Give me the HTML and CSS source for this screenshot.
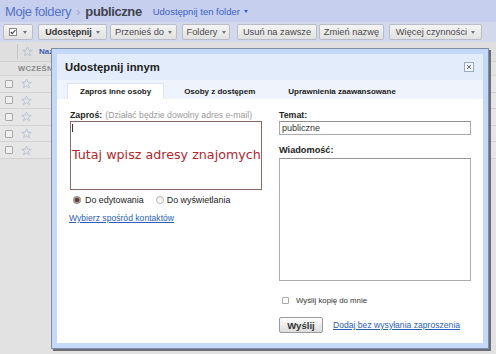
FILE: index.html
```html
<!DOCTYPE html>
<html lang="pl">
<head>
<meta charset="utf-8">
<title>Udostępnij innym</title>
<link rel="stylesheet" href="styles.css">
</head>
<body>
<header class="top">
  <span class="crumb-root">Moje foldery</span><span class="crumb-sep">›</span><span class="crumb-cur">publiczne</span>
  <span class="share-folder">Udostępnij ten folder<span class="caret"></span></span>
</header>
<div class="toolbar">
  <span class="btn b1"><svg class="tb-check" width="8" height="8" viewBox="0 0 8 8"><rect x="0.5" y="0.5" width="7" height="7" fill="#fff" stroke="#8a8a8a"/><path d="M1.8 4 L3.3 5.6 L6.3 2" fill="none" stroke="#444" stroke-width="1.1"/></svg><span class="caret"></span></span>
  <span class="btn b2"><b>Udostępnij</b><span class="caret"></span></span>
  <span class="btn b3">Przenieś do<span class="caret"></span></span>
  <span class="btn b4">Foldery<span class="caret"></span></span>
  <span class="btn b5">Usuń na zawsze</span>
  <span class="btn b6">Zmień nazwę</span>
  <span class="btn b7">Więcej czynności<span class="caret"></span></span>
</div>
<div class="list">
  <div class="list-head"><span class="col-sep"></span><svg class="star" width="11" height="11" viewBox="0 0 11 11"><path d="M5.5 1 L6.8 4.2 L10.2 4.3 L7.5 6.4 L8.5 9.8 L5.5 7.9 L2.5 9.8 L3.5 6.4 L0.8 4.3 L4.2 4.2 Z" fill="none" stroke="#b7bfd0" stroke-width="0.9"/></svg><span class="col-name">Nazwa</span></div>
  <div class="section">WCZEŚNIEJ</div>
  <div class="row"><span class="chk"></span><svg class="star" width="11" height="11" viewBox="0 0 11 11"><path d="M5.5 1 L6.8 4.2 L10.2 4.3 L7.5 6.4 L8.5 9.8 L5.5 7.9 L2.5 9.8 L3.5 6.4 L0.8 4.3 L4.2 4.2 Z" fill="none" stroke="#b7bfd0" stroke-width="0.9"/></svg></div>
  <div class="row"><span class="chk"></span><svg class="star" width="11" height="11" viewBox="0 0 11 11"><path d="M5.5 1 L6.8 4.2 L10.2 4.3 L7.5 6.4 L8.5 9.8 L5.5 7.9 L2.5 9.8 L3.5 6.4 L0.8 4.3 L4.2 4.2 Z" fill="none" stroke="#b7bfd0" stroke-width="0.9"/></svg></div>
  <div class="row"><span class="chk"></span><svg class="star" width="11" height="11" viewBox="0 0 11 11"><path d="M5.5 1 L6.8 4.2 L10.2 4.3 L7.5 6.4 L8.5 9.8 L5.5 7.9 L2.5 9.8 L3.5 6.4 L0.8 4.3 L4.2 4.2 Z" fill="none" stroke="#b7bfd0" stroke-width="0.9"/></svg></div>
  <div class="row"><span class="chk"></span><svg class="star" width="11" height="11" viewBox="0 0 11 11"><path d="M5.5 1 L6.8 4.2 L10.2 4.3 L7.5 6.4 L8.5 9.8 L5.5 7.9 L2.5 9.8 L3.5 6.4 L0.8 4.3 L4.2 4.2 Z" fill="none" stroke="#b7bfd0" stroke-width="0.9"/></svg></div>
  <div class="row"><span class="chk"></span><svg class="star" width="11" height="11" viewBox="0 0 11 11"><path d="M5.5 1 L6.8 4.2 L10.2 4.3 L7.5 6.4 L8.5 9.8 L5.5 7.9 L2.5 9.8 L3.5 6.4 L0.8 4.3 L4.2 4.2 Z" fill="none" stroke="#b7bfd0" stroke-width="0.9"/></svg></div>
</div>

<div class="dialog">
  <div class="dbox">
    <div class="dhead">
      <span class="dtitle">Udostępnij innym</span>
      <svg class="close" width="10" height="10" viewBox="0 0 10 10"><rect x="0.5" y="0.5" width="9" height="9" fill="#f1f5fc" stroke="#9eacc3"/><path d="M3 3 L7 7 M7 3 L3 7" stroke="#666" stroke-width="1"/></svg>
    </div>
    <div class="tabs">
      <span class="tab active">Zaproś inne osoby</span>
      <span class="tab">Osoby z dostępem</span>
      <span class="tab">Uprawnienia zaawansowane</span>
    </div>
    <div class="dcontent">
      <div class="col">
        <div class="lbl"><b>Zaproś:</b><span class="hint">(Działać będzie dowolny adres e-mail)</span></div>
        <div class="invite">
          <div class="cursor"></div>
          <div class="annot">Tutaj wpisz adresy znajomych</div>
        </div>
        <div class="radios">
          <span class="radio on"></span><span class="rlabel">Do edytowania</span>
          <span class="radio off"></span><span class="rlabel">Do wyświetlania</span>
        </div>
        <span class="link contacts">Wybierz spośród kontaktów</span>
      </div>
      <div class="col">
        <div class="lbl"><b>Temat:</b></div>
        <div class="subject">publiczne</div>
        <div class="lbl lbl-msg"><b>Wiadomość:</b></div>
        <div class="message"></div>
        <div class="copy"><span class="cbox"></span>Wyślij kopię do mnie</div>
        <div class="actions">
          <span class="send">Wyślij</span>
          <span class="link addlink">Dodaj bez wysyłania zaproszenia</span>
        </div>
      </div>
    </div>
  </div>
</div>
</body>
</html>
```

FILE: styles.css
```css
* { box-sizing: border-box; }

body {
  margin: 0;
  width: 496px;
  height: 354px;
  overflow: hidden;
  position: relative;
  background: #e2e2e2;
  font-family: "Liberation Sans", Arial, sans-serif;
  color: #222;
}

/* ---------- header ---------- */
.top {
  height: 22px;
  background: #c6d0ee;
  display: flex;
  align-items: center;
  padding-left: 5px;
  white-space: nowrap;
}
.crumb-root { font-size: 13px; letter-spacing: -0.4px; color: #5670c6; }
.crumb-sep { font-size: 13px; color: #9ea9cc; margin: 0 5px; }
.crumb-cur { font-size: 13px; letter-spacing: -0.4px; font-weight: bold; color: #42434f; }
.share-folder {
  margin-left: 11px;
  margin-top: 1px;
  font-size: 9.5px;
  color: #3b5ec2;
  display: flex;
  align-items: center;
}
.caret {
  display: inline-block;
  width: 0;
  height: 0;
  border-left: 2.5px solid transparent;
  border-right: 2.5px solid transparent;
  border-top: 3px solid #777;
  margin-left: 4px;
}
.share-folder .caret { border-top-color: #3b5ec2; }

/* ---------- toolbar ---------- */
.toolbar {
  height: 20px;
  background: #d3d9ec;
  display: flex;
  align-items: center;
  padding-left: 3px;
}
.btn {
  height: 16px;
  border: 1px solid #babdc6;
  border-radius: 2px;
  background: linear-gradient(#f4f4f4, #e1e1e1);
  display: flex;
  align-items: center;
  justify-content: center;
  font-size: 9.3px;
  color: #4a4a4a;
  white-space: nowrap;
}
.btn b { font-size: 9px; color: #333; }
.b1 { width: 30px; }
.b1 .caret { margin-left: 6px; }
.b2 { width: 69px; margin-left: 5px; }
.b3 { width: 67px; margin-left: 3px; }
.b4 { width: 48px; margin-left: 5px; }
.b5 { width: 80px; margin-left: 7px; }
.b6 { width: 65px; margin-left: 2px; }
.b7 { width: 93px; margin-left: 5px; }

/* ---------- list ---------- */
.list-head {
  height: 20px;
  display: flex;
  align-items: center;
  background: #dfdfdf;
  border-bottom: 1px solid #d0d0d0;
}
.col-sep { width: 1px; height: 15px; background: #c6c6c6; margin-left: 17px; }
.list-head .star { margin-left: 4px; }
.col-name { margin-left: 6px; font-size: 8px; font-weight: bold; color: #3c5db5; }
.section {
  height: 14px;
  display: flex;
  align-items: center;
  padding-left: 18px;
  font-size: 7.6px;
  font-weight: bold;
  color: #8a8a8a;
  letter-spacing: 0.3px;
  border-bottom: 1px solid #d6d6d6;
}
.row {
  height: 16.6px;
  display: flex;
  align-items: center;
  padding-left: 5px;
  background: #e6e6e6;
  border-bottom: 1px solid #d3d3d3;
}
.chk {
  width: 8px;
  height: 8px;
  border: 1px solid #a9a9a9;
  border-radius: 1px;
  background: #efefef;
}
.row .star { margin-left: 8px; }

/* ---------- dialog ---------- */
.dialog {
  position: absolute;
  left: 51px;
  top: 48px;
  width: 438px;
  height: 301px;
  border: 1px solid #7f8ea8;
  padding: 5px;
  background: #c4d9f8;
  box-shadow: 2px 2px 0 rgba(70, 70, 80, 0.75);
}
.dbox {
  height: 100%;
  background: #fff;
  display: flex;
  flex-direction: column;
}
.dhead {
  height: 26px;
  flex: none;
  background: #e3ecfa;
  display: flex;
  align-items: center;
  justify-content: space-between;
  padding: 0 9px 0 8px;
}
.dtitle { font-size: 11.3px; font-weight: bold; color: #1e1e1e; }
.close { display: block; margin-top: -1px; }

.tabs {
  height: 19px;
  flex: none;
  background: #eef3fc;
  display: flex;
  align-items: flex-end;
  gap: 7px;
  padding-left: 10px;
}
.tab {
  height: 16px;
  padding: 0 12px;
  display: flex;
  align-items: center;
  font-size: 8px;
  font-weight: bold;
  color: #222;
  border: 1px solid transparent;
  border-bottom: 0;
  white-space: nowrap;
}
.tab.active { background: #fff; border-color: #dae4f4; }

.dcontent {
  flex: 1;
  display: flex;
  gap: 17px;
  padding: 11px 12px 0 13px;
}
.col { width: 192px; display: flex; flex-direction: column; }
.lbl { height: 10px; line-height: 10px; font-size: 8.8px; white-space: nowrap; }
.lbl b { color: #222; }
.hint { color: #9a9a9a; font-size: 8.7px; margin-left: 3px; }

.invite {
  margin-top: 1px;
  height: 69px;
  border: 1px solid #8e6666;
  padding: 2px 1px;
}
.cursor { width: 1px; height: 8px; background: #333; }
.annot {
  margin-top: 15px;
  font-family: "DejaVu Sans", sans-serif;
  font-size: 12.7px;
  line-height: 15px;
  color: #b0272d;
  white-space: nowrap;
}

.radios {
  margin-top: 5px;
  height: 10px;
  display: flex;
  align-items: center;
  font-size: 8.9px;
  color: #222;
  white-space: nowrap;
}
.radio { width: 8px; height: 8px; border-radius: 50%; flex: none; }
.radio.on {
  margin-left: 3px;
  background: radial-gradient(circle, #6e3a36 0, #6e3a36 1.8px, #9a9a9a 2.6px);
}
.radio.off {
  margin-left: 12px;
  border: 1px solid #b3b3b3;
  background: linear-gradient(#f0f0f0, #fff);
}
.rlabel { margin-left: 4px; }
.radio.off + .rlabel { margin-left: 3px; }

.link { color: #2b5fb5; text-decoration: underline; white-space: nowrap; }
.contacts { margin-top: 8px; margin-left: -1px; font-size: 8.6px; line-height: 10px; }

.subject {
  margin-top: 1px;
  height: 14px;
  border: 1px solid #ababab;
  border-top-color: #909090;
  padding-left: 2px;
  font-size: 9px;
  line-height: 12px;
  color: #333;
}
.lbl-msg { margin-top: 10px; font-size: 9.2px; }
.message {
  margin-top: 3px;
  height: 123px;
  border: 1px solid #ababab;
  border-top-color: #959595;
}
.copy {
  margin-top: 14px;
  height: 10px;
  display: flex;
  align-items: center;
  font-size: 7.8px;
  color: #333;
  white-space: nowrap;
}
.cbox {
  width: 7px;
  height: 7px;
  margin: 0 7px 0 3px;
  border: 1px solid #aaa;
  border-radius: 1px;
  background: #fff;
}
.actions { margin-top: 12px; display: flex; align-items: center; }
.send {
  width: 44px;
  height: 16px;
  border: 1px solid #9b9b9b;
  border-radius: 2px;
  background: linear-gradient(#fdfdfd, #dcdcdc);
  display: flex;
  align-items: center;
  justify-content: center;
  font-size: 9.6px;
  font-weight: bold;
  color: #333;
}
.addlink { margin-left: 10px; font-size: 8.6px; }
```
